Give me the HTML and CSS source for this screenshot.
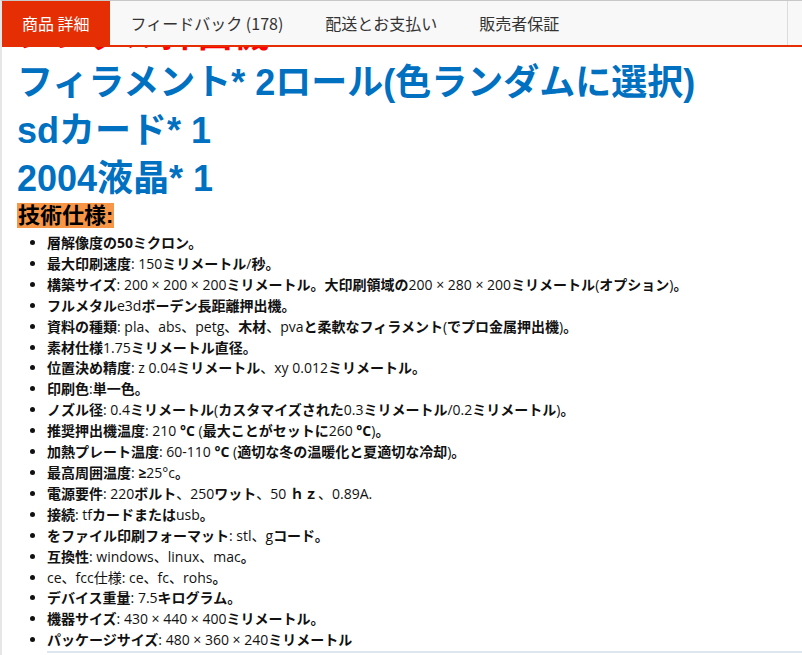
FILE: index.html
```html
<!DOCTYPE html>
<html lang="ja">
<head>
<meta charset="utf-8">
<title>商品 詳細</title>
<link rel="stylesheet" href="styles.css">
</head>
<body>
<div class="page">
  <nav class="tabs">
    <div class="tab active">商品 詳細</div>
    <div class="tab">フィードバック (178)</div>
    <div class="tab">配送とお支払い</div>
    <div class="tab">販売者保証</div>
    <div class="tab-fill"></div>
  </nav>
  <div class="content">
    <div class="clip">
      <div class="title red">シングル押出機</div>
    </div>
    <div class="title blue">フィラメント* 2ロール(色ランダムに選択)</div>
    <div class="title blue">sdカード* 1</div>
    <div class="title blue">2004液晶* 1</div>
    <div class="spec-head"><span class="spec-label">技術仕様:</span></div>
    <ul class="specs">
      <li><b>層解像度の50ミクロン。</b></li>
      <li><b>最大印刷速度</b>: 150<b>ミリメートル</b>/<b>秒。</b></li>
      <li><b>構築サイズ</b>: 200 × 200 × 200<b>ミリメートル。大印刷領域の</b>200 × 280 × 200<b>ミリメートル</b>(<b>オプション</b>)<b>。</b></li>
      <li><b>フルメタル</b>e3d<b>ボーデン長距離押出機。</b></li>
      <li><b>資料の種類</b>: pla、abs、petg、<b>木材</b>、pva<b>と柔軟なフィラメント</b>(<b>でプロ金属押出機</b>)<b>。</b></li>
      <li><b>素材仕様</b>1.75<b>ミリメートル直径。</b></li>
      <li><b>位置決め精度</b>: z 0.04<b>ミリメートル</b>、xy 0.012<b>ミリメートル。</b></li>
      <li><b>印刷色</b>:<b>単一色。</b></li>
      <li><b>ノズル径</b>: 0.4<b>ミリメートル</b>(<b>カスタマイズされた</b>0.3<b>ミリメートル</b>/0.2<b>ミリメートル</b>)<b>。</b></li>
      <li><b>推奨押出機温度</b>: 210 <b>°C</b> (<b>最大ことがセットに</b>260 <b>°C</b>)<b>。</b></li>
      <li><b>加熱プレート温度</b>: 60-110 <b>°C</b> (<b>適切な冬の温暖化と夏適切な冷却</b>)<b>。</b></li>
      <li><b>最高周囲温度</b>: <b>≥</b>25°c<b>。</b></li>
      <li><b>電源要件</b>: 220<b>ボルト</b>、250<b>ワット</b>、50 <b>ｈｚ</b>、0.89A.</li>
      <li><b>接続</b>: tf<b>カードまたは</b>usb<b>。</b></li>
      <li><b>をファイル印刷フォーマット</b>: stl、g<b>コード。</b></li>
      <li><b>互換性</b>: windows、linux、mac<b>。</b></li>
      <li>ce、fcc仕様: ce、fc、rohs<b>。</b></li>
      <li><b>デバイス重量</b>: 7.5<b>キログラム。</b></li>
      <li><b>機器サイズ</b>: 430 × 440 × 400<b>ミリメートル。</b></li>
      <li><b>パッケージサイズ</b>: 480 × 360 × 240<b>ミリメートル</b></li>
    </ul>
    <div class="rule"></div>
  </div>
</div>
</body>
</html>
```
FILE: styles.css
```css
html, body {
  margin: 0;
  padding: 0;
  background: #ffffff;
}

.page {
  min-height: 654px;
  border-top: 1px solid #c8c8c8;
  border-left: 2px solid #e6e6e6;
  overflow: hidden;
}

.tabs {
  height: 44px;
  display: flex;
  background: #f8f8f8;
  border-bottom: 2px solid #e62e04;
  font-family: "Noto Sans CJK JP", "Noto Sans", sans-serif;
  font-size: 16px;
  color: #333333;
}

.tab {
  padding: 0 21px;
  line-height: 44px;
  white-space: nowrap;
}

.tab.active {
  background: #e62e04;
  color: #ffffff;
  height: 46px;
  padding: 0 20px;
}

.tab-fill {
  flex: 1;
  border-right: 1px solid #dcdcdc;
  margin-right: 14px;
}

.content {
  padding: 0 0 0 15px;
}

.clip {
  height: 12px;
  overflow: hidden;
}

.clip .title {
  margin-top: -36px;
}

.title {
  font-family: "Liberation Sans", "Noto Sans CJK JP", sans-serif;
  font-weight: bold;
  font-size: 36px;
  line-height: 48px;
  white-space: nowrap;
}

.title.red {
  color: #ff0000;
}

.title.blue {
  color: #0070c0;
}

.spec-head {
  height: 26px;
}

.spec-label {
  display: inline-block;
  background: #f79646;
  color: #000000;
  font-family: "Liberation Sans", "Noto Sans CJK JP", sans-serif;
  font-weight: bold;
  font-size: 22px;
  line-height: 25px;
  padding: 0 1px;
}

.specs {
  margin: 4px 0 0 0;
  padding-left: 30px;
  font-family: "Open Sans", "Noto Sans CJK JP", sans-serif;
  font-size: 14px;
  line-height: 20.9px;
  color: #111111;
}

.specs li {
  white-space: nowrap;
}

.specs b {
  font-weight: bold;
}

.rule {
  margin-left: 30px;
  border-top: 2px solid #dde6ef;
}
```
